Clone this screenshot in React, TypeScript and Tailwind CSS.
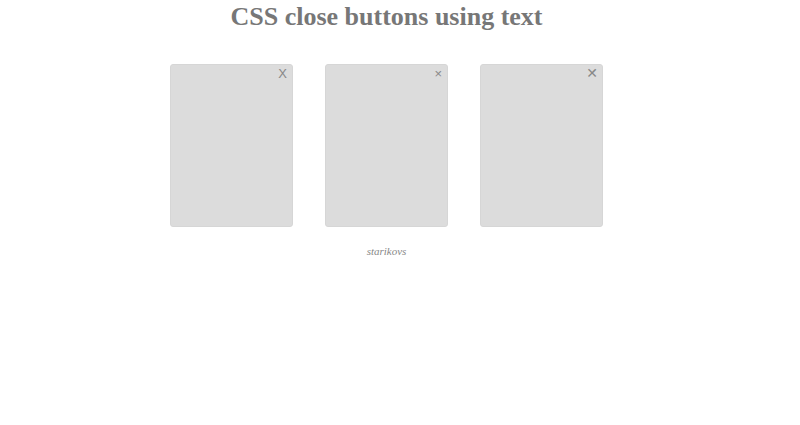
export default function App() {
  const closers = [
    { glyph: 'X', cls: 'right-[5px] top-[2px] text-[13px] font-["Liberation_Sans",sans-serif]' },
    { glyph: '×', cls: 'right-[5px] top-[2px] text-[13px] font-["Liberation_Sans",sans-serif]' },
    { glyph: '✕', cls: 'right-[4px] top-[1px] text-[14px] font-["DejaVu_Sans",sans-serif]' },
  ]

  return (
    <div className="min-h-[425px] w-[773px] bg-white font-['Liberation_Serif',serif] text-[#777]">
      <h1 className="pt-[2px] text-center text-[26px] font-bold leading-[30px] text-[#777]">
        CSS close buttons using text
      </h1>
      <div className="mt-[32px] flex justify-center gap-[32px]">
        {closers.map((c, i) => (
          <div
            key={i}
            className="relative h-[163px] w-[123px] rounded-[3px] border border-[#d6d6d6] bg-[#dcdcdc]"
          >
            <span className={`absolute leading-none text-[#888] ${c.cls}`}>{c.glyph}</span>
          </div>
        ))}
      </div>
      <p className="mt-[16px] text-center text-[11px] italic text-[#888]">starikovs</p>
    </div>
  )
}
